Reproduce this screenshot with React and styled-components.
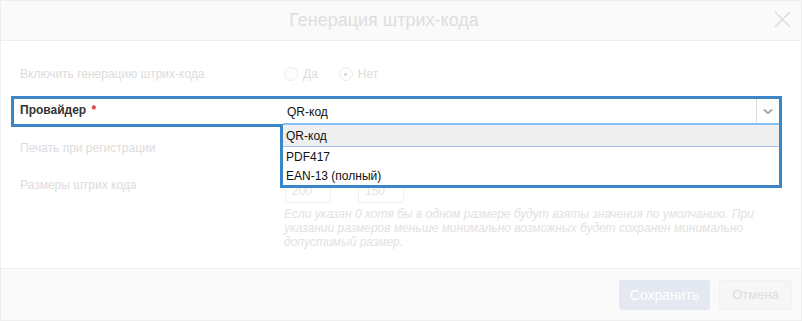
import React from "react";
import styled, { createGlobalStyle } from "styled-components";

const GlobalStyle = createGlobalStyle`
  html, body {
    margin: 0;
    padding: 0;
    background: #fff;
  }
  body {
    font-family: "Liberation Sans", Arial, sans-serif;
    font-size: 12px;
    color: #333;
  }
  * { box-sizing: border-box; }
`;

const providers = ["QR-код", "PDF417", "EAN-13 (полный)"];

export default function App() {
  return (
    <>
      <GlobalStyle />
      <Modal>
        <Header>
          <Title>Генерация штрих-кода</Title>
          <CloseButton>
            <svg width="17" height="17" viewBox="0 0 17 17">
              <path d="M1 1L16 16M16 1L1 16" stroke="#dedede" strokeWidth="1.6" fill="none" />
            </svg>
          </CloseButton>
        </Header>

        <Body>
          <Row>
            <Label>Включить генерацию штрих-кода</Label>
            <Radios>
              <RadioItem><Radio /> Да</RadioItem>
              <RadioItem><Radio $checked /> Нет</RadioItem>
            </Radios>
          </Row>

          <HighlightRow>
            <ActiveLabel>Провайдер <Required>*</Required></ActiveLabel>
            <Select>
              <SelectValue>QR-код</SelectValue>
              <SelectArrow>
                <svg width="10" height="7" viewBox="0 0 10 7">
                  <path d="M1 1.5L5 5.2L9 1.5" stroke="#a9a9a9" strokeWidth="2" fill="none" />
                </svg>
              </SelectArrow>
              <Dropdown>
                {providers.map((p, i) => (
                  <Option key={p} $active={i === 0}>{p}</Option>
                ))}
              </Dropdown>
            </Select>
          </HighlightRow>

          <Row $gap={9}>
            <Label>Печать при регистрации</Label>
            <div />
          </Row>

          <SizeRow>
            <Label>Размеры штрих кода</Label>
            <div>
              <Inputs>
                <SizeInput>200</SizeInput>
                <SizeInput>150</SizeInput>
              </Inputs>
              <Help>
                Если указан 0 хотя бы в одном размере будут взяты значения по умолчанию. При
                указании размеров меньше минимально возможных будет сохранен минимально
                допустимый размер.
              </Help>
            </div>
          </SizeRow>
        </Body>

        <Footer>
          <SaveButton>Сохранить</SaveButton>
          <CancelButton>Отмена</CancelButton>
        </Footer>
      </Modal>
    </>
  );
}

const Modal = styled.div`
  width: 802px;
  height: 321px;
  border: 1px solid #eeeeee;
  display: flex;
  flex-direction: column;
  background: #fff;
  overflow: hidden;
`;

const Header = styled.div`
  height: 40px;
  flex-shrink: 0;
  display: flex;
  align-items: center;
  padding-right: 4px;
  background: #fafafa;
  border-bottom: 1px solid #eeeeee;
`;

const Title = styled.div`
  flex: 1;
  text-align: center;
  font-size: 18px;
  color: #dedede;
`;

const CloseButton = styled.div`
  width: 30px;
  display: flex;
  justify-content: center;
  align-items: center;
  margin-top: -2px;
`;

const Body = styled.div`
  flex: 1;
  padding: 21px 22px 0 19px;
`;

const Row = styled.div`
  display: grid;
  grid-template-columns: 263px 1fr;
  align-items: center;
  height: 24px;
  margin-top: ${p => p.$gap || 0}px;
`;

const Label = styled.div`
  color: #dcdcdc;
  font-size: 12px;
`;

const Radios = styled.div`
  display: flex;
  align-items: center;
  gap: 21px;
  padding-left: 1px;
`;

const RadioItem = styled.label`
  display: flex;
  align-items: center;
  gap: 5px;
  color: #dcdcdc;
  font-size: 12px;
`;

const Radio = styled.span`
  width: 14px;
  height: 14px;
  border-radius: 50%;
  border: 1px solid #ececec;
  background: #fdfdfd;
  position: relative;

  &::after {
    content: "";
    display: ${p => (p.$checked ? "block" : "none")};
    position: absolute;
    left: 4.5px;
    top: 4.5px;
    width: 3px;
    height: 3px;
    border-radius: 50%;
    background: #d4d4d4;
  }
`;

const HighlightRow = styled.div`
  position: relative;
  display: grid;
  grid-template-columns: 263px 1fr;
  align-items: center;
  height: 31px;
  margin: 10px -3px 0 -9px;
  padding-left: 6px;
  border: 3px solid #3b86c6;
  z-index: 2;
`;

const ActiveLabel = styled.div`
  font-size: 12px;
  font-weight: bold;
  color: #333;
  margin-top: -5px;
`;

const Required = styled.span`
  color: #e0262b;
  margin-left: 2px;
`;

const Select = styled.div`
  position: relative;
  align-self: start;
  height: 26px;
  display: flex;
  align-items: center;
  background: #fff;
  border-bottom: 2px solid #84c2f6;
`;

const SelectValue = styled.div`
  flex: 1;
  padding-left: 4px;
  padding-top: 1px;
  font-size: 12px;
  color: #111;
`;

const SelectArrow = styled.div`
  width: 23px;
  height: 100%;
  display: flex;
  align-items: center;
  justify-content: center;
  border-left: 1px solid #dcdcdc;
  padding-top: 1px;
`;

const Dropdown = styled.div`
  position: absolute;
  top: 100%;
  left: -3px;
  right: -3px;
  margin-top: 2px;
  background: #fff;
  border: 3px solid #3b86c6;
  border-top: none;
  z-index: 5;
`;

const Option = styled.div`
  height: ${p => (p.$active ? 22 : 19)}px;
  display: flex;
  align-items: center;
  padding-left: 3px;
  font-size: 12px;
  color: #111;
  background: ${p => (p.$active ? "#efefef" : "#fff")};
  border-bottom: ${p => (p.$active ? "1px solid #a6bdee" : "none")};
`;

const SizeRow = styled.div`
  display: grid;
  grid-template-columns: 263px 1fr;
  align-items: start;
  margin-top: 18px;

  & > ${Label} {
    line-height: 14px;
  }
`;

const Inputs = styled.div`
  display: flex;
  gap: 27px;
  padding-left: 2px;
  margin-top: 1px;
`;

const SizeInput = styled.div`
  width: 46px;
  height: 24px;
  border: 1px solid #f0f0f0;
  border-radius: 2px;
  padding: 4px 6px;
  color: #e4e4e4;
  font-size: 12px;
`;

const Help = styled.div`
  margin-top: 4px;
  padding-left: 1px;
  width: 478px;
  font-size: 12px;
  font-style: italic;
  line-height: 14px;
  color: #e2e2e2;
`;

const Footer = styled.div`
  height: 52px;
  flex-shrink: 0;
  display: flex;
  justify-content: flex-end;
  align-items: center;
  gap: 9px;
  padding: 0 9px 0 0;
  background: #fafafa;
  border-top: 1px solid #eeeeee;
`;

const SaveButton = styled.div`
  width: 91px;
  height: 30px;
  border-radius: 3px;
  background: #e3e8f1;
  color: #fff;
  font-size: 14px;
  display: flex;
  align-items: center;
  justify-content: center;
`;

const CancelButton = styled(SaveButton)`
  width: 73px;
  background: #f6f6f6;
  border: 1px solid #f1f1f1;
  color: #dedede;
  font-size: 13px;
`;
